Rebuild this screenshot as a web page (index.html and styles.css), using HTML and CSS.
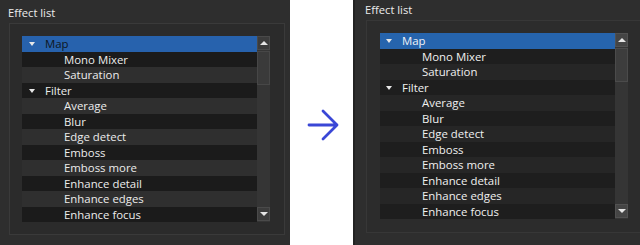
FILE: index.html
```html
<!DOCTYPE html>
<html>
<head>
<meta charset="utf-8">
<link rel="stylesheet" href="styles.css">
</head>
<body>
<div class="screen">
  <section class="pane pane-a">
    <div class="title">Effect list</div>
    <div class="box">
      <div class="tree">
        <ul class="rows">
          <li class="row group sel"><span class="caret"></span>Map</li>
          <li class="row child">Mono Mixer</li>
          <li class="row child">Saturation</li>
          <li class="row group"><span class="caret"></span>Filter</li>
          <li class="row child">Average</li>
          <li class="row child">Blur</li>
          <li class="row child">Edge detect</li>
          <li class="row child">Emboss</li>
          <li class="row child">Emboss more</li>
          <li class="row child">Enhance detail</li>
          <li class="row child">Enhance edges</li>
          <li class="row child">Enhance focus</li>
        </ul>
        <div class="scrollbar">
          <div class="sbtn up"><span class="tri-up"></span></div>
          <div class="thumb"></div>
          <div class="track"></div>
          <div class="sbtn down"><span class="tri-down"></span></div>
        </div>
      </div>
    </div>
  </section>
  <div class="gap">
    <svg class="arrow" width="63" height="245" viewBox="0 0 63 245">
      <path d="M19 125 H47 M33 111 L47 125 L33 139" fill="none" stroke="#3a47d6" stroke-width="2.8" stroke-linecap="round" stroke-linejoin="round"/>
    </svg>
  </div>
  <section class="pane pane-b">
    <div class="title">Effect list</div>
    <div class="box">
      <div class="tree">
        <ul class="rows">
          <li class="row group sel"><span class="caret"></span>Map</li>
          <li class="row child">Mono Mixer</li>
          <li class="row child">Saturation</li>
          <li class="row group"><span class="caret"></span>Filter</li>
          <li class="row child">Average</li>
          <li class="row child">Blur</li>
          <li class="row child">Edge detect</li>
          <li class="row child">Emboss</li>
          <li class="row child">Emboss more</li>
          <li class="row child">Enhance detail</li>
          <li class="row child">Enhance edges</li>
          <li class="row child">Enhance focus</li>
        </ul>
        <div class="scrollbar">
          <div class="sbtn up"><span class="tri-up"></span></div>
          <div class="thumb"></div>
          <div class="track"></div>
          <div class="sbtn down"><span class="tri-down"></span></div>
        </div>
      </div>
    </div>
  </section>
</div>
</body>
</html>
```
FILE: styles.css
```css
html, body {
  margin: 0;
  padding: 0;
  background: #ffffff;
}
body {
  font-family: "Open Sans", "Noto Sans", sans-serif;
  font-size: 11.4px;
  color: #ececec;
}
.screen {
  display: flex;
  width: 640px;
  height: 245px;
  overflow: hidden;
}
.pane {
  height: 245px;
  background: #2e2e2e;
  overflow: hidden;
  box-sizing: border-box;
}
.pane-a {
  width: 290px;
  padding-left: 8px;
}
.pane-b {
  flex: 1;
  border-left: 2px solid #232323;
  padding-left: 10px;
}
.gap {
  width: 63px;
  flex: none;
  background: #ffffff;
}
.arrow {
  display: block;
}
.title {
  font-size: 11.2px;
  line-height: 16px;
  color: #ececec;
  box-sizing: border-box;
}
.pane-a .title {
  height: 23px;
  padding-top: 5px;
}
.pane-b .title {
  height: 20px;
  padding-top: 2px;
}
.box {
  margin-left: 1px;
  border: 1px solid #3a3a3a;
  background: #2b2b2b;
  box-sizing: border-box;
}
.pane-a .box {
  width: 276px;
  height: 212px;
  padding: 12px 0 0 12px;
}
.pane-b .box {
  width: 300px;
  height: 213px;
  padding: 12px 0 0 13px;
  border-color: #373737;
  background: #2c2c2c;
}
.tree {
  display: flex;
  width: 248px;
  height: 186px;
  overflow: hidden;
}
.rows {
  list-style: none;
  margin: 0;
  padding: 0;
  width: 235px;
  flex: none;
}
.row {
  height: 15.5px;
  line-height: 15px;
  white-space: nowrap;
  position: relative;
}
.group { padding-left: 23px; }
.child { padding-left: 42px; }
.pane-b .group { padding-left: 22px; }

.pane-a .row:nth-child(odd) { background: #2f2f2f; }
.pane-a .row:nth-child(even) { background: #1b1b1b; }
.pane-b .row { color: #f0f0f0; }
.pane-b .row:nth-child(odd) { background: #262626; }
.pane-b .row:nth-child(even) { background: #1e1e1e; }

.pane-a .row.sel { background: #2762ad; color: #0e1622; }
.pane-b .row.sel { background: #2664ad; color: #eef2f8; }

.caret {
  position: absolute;
  left: 7px;
  top: 6px;
  width: 0;
  height: 0;
  border-left: 3.5px solid transparent;
  border-right: 3.5px solid transparent;
  border-top: 4px solid #e8e8e8;
}
.pane-b .caret { left: 6px; }

.scrollbar {
  width: 13px;
  flex: none;
  display: flex;
  flex-direction: column;
  background: #353535;
}
.sbtn {
  height: 14px;
  box-sizing: border-box;
  border: 1px solid #4a4a4a;
  background: #3c3c3c;
  display: flex;
  align-items: center;
  justify-content: center;
}
.pane-b .sbtn {
  background: #454545;
  border-color: #515151;
}
.down { margin-top: auto; margin-bottom: 1px; }
.thumb {
  height: 34px;
  margin-top: 1px;
  box-sizing: border-box;
  border: 1px solid #474747;
  background: #3a3a3a;
}
.pane-b .thumb {
  background: #3d3d3d;
  border-color: #4b4b4b;
}
.track { flex: 1; }
.tri-up {
  width: 0; height: 0;
  border-left: 4px solid transparent;
  border-right: 4px solid transparent;
  border-bottom: 4px solid #e6e6e6;
}
.tri-down {
  width: 0; height: 0;
  border-left: 4px solid transparent;
  border-right: 4px solid transparent;
  border-top: 4px solid #e6e6e6;
}
```
